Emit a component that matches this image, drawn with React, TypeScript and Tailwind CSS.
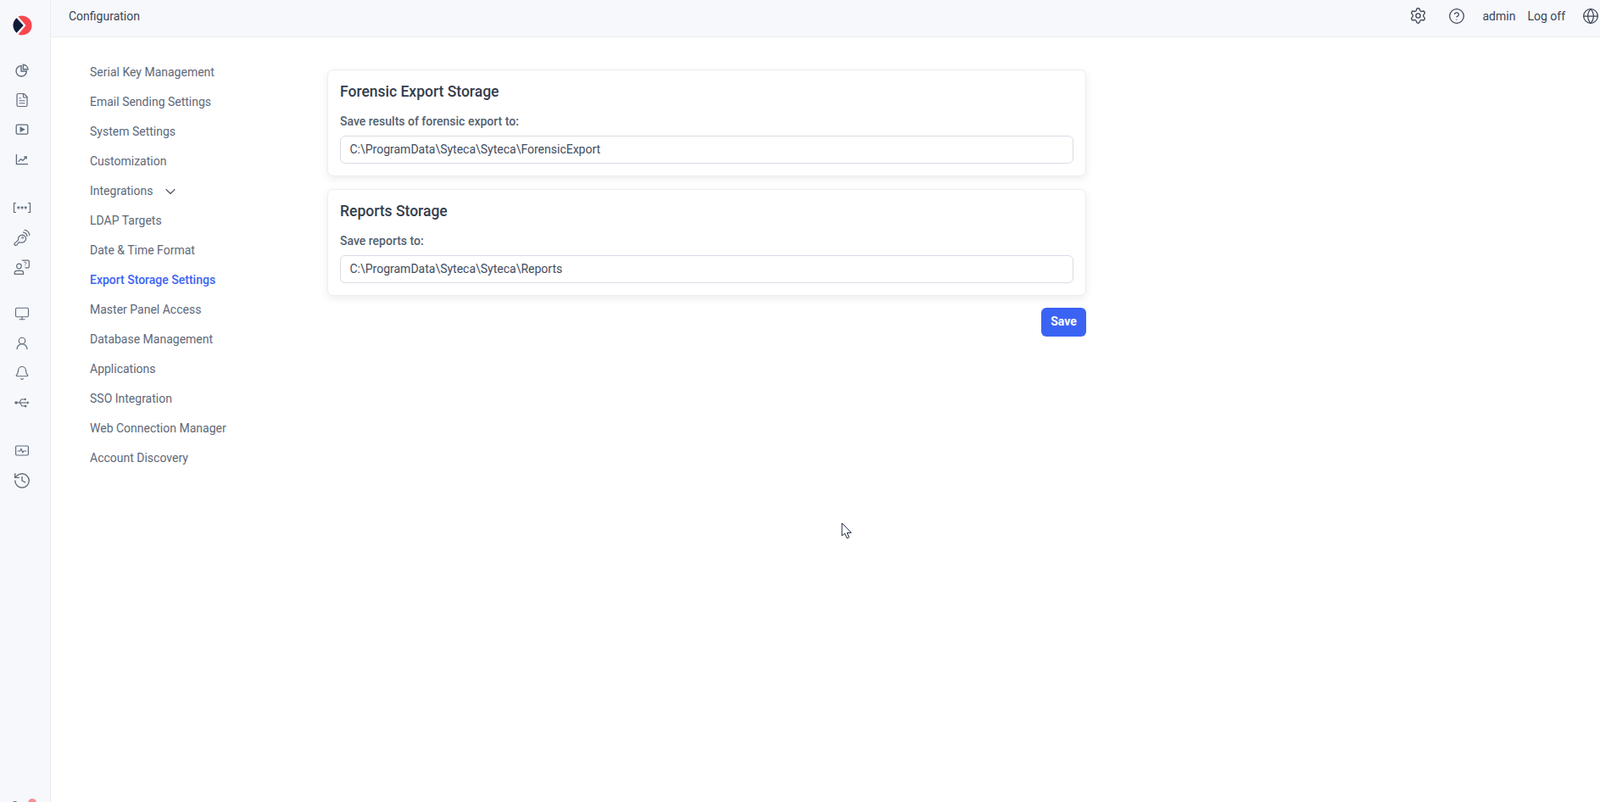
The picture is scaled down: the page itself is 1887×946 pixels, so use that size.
import { Bell, ChevronDown, CircleHelp, FileText, Globe, History, Monitor, Settings, UserRound } from "lucide-react";

const menu = [
  "Serial Key Management",
  "Email Sending Settings",
  "System Settings",
  "Customization",
  "Integrations",
  "LDAP Targets",
  "Date & Time Format",
  "Export Storage Settings",
  "Master Panel Access",
  "Database Management",
  "Applications",
  "SSO Integration",
  "Web Connection Manager",
  "Account Discovery",
];

function Logo() {
  return (
    <svg width="24" height="24" viewBox="0 0 24 24">
      <path d="M6.5 1.6A11.4 11.4 0 1 1 6.5 22.4L15.5 12Z" fill="#f8474f" />
      <path d="M4.6 3.2 12.6 12l-8 8.8A11.4 11.4 0 0 1 4.6 3.2Z" fill="#0d1b36" />
    </svg>
  );
}

function PieIcon() {
  return (
    <svg width="18" height="18" viewBox="0 0 18 18" fill="none" stroke="#5f6b7d" strokeWidth="1.4">
      <path d="M8 3.6A6.2 6.2 0 1 0 14.4 10H8Z" />
      <path d="M10.3 2.2A6 6 0 0 1 16 7.8h-5.7Z" />
    </svg>
  );
}

function PlayBox() {
  return (
    <svg width="18" height="18" viewBox="0 0 18 18" fill="none" stroke="#5f6b7d" strokeWidth="1.3">
      <rect x="2.2" y="3.2" width="13.6" height="11" rx="1.4" />
      <path d="M7.2 6.4 11.4 8.7 7.2 11Z" fill="#5f6b7d" />
    </svg>
  );
}

function TrendBox() {
  return (
    <svg width="18" height="18" viewBox="0 0 18 18" fill="none" stroke="#5f6b7d" strokeWidth="1.3">
      <path d="M2.4 3v11.6h13.6" />
      <path d="M4.6 11.6 7.6 8.6l2.2 1.8 4.2-4.2M11.4 6h2.8v2.6" />
    </svg>
  );
}

function MaskedIcon() {
  return (
    <svg width="22" height="14" viewBox="0 0 22 14" fill="none" stroke="#5f6b7d" strokeWidth="1.2">
      <path d="M4 1.5H1.5v11H4M18 1.5h2.5v11H18" />
      <path d="M6.8 5.2v3.6M5.3 6.1l3 1.8M8.3 6.1l-3 1.8M11 5.2v3.6M9.5 6.1l3 1.8M12.5 6.1l-3 1.8M15.2 5.2v3.6M13.7 6.1l3 1.8M16.7 6.1l-3 1.8" strokeWidth="1.1" />
    </svg>
  );
}

function KeySignal() {
  return (
    <svg width="20" height="20" viewBox="0 0 20 20" fill="none" stroke="#5f6b7d" strokeWidth="1.2">
      <path d="M.8 17.4 1.6 19.6 4 19l1-2 1.6-1.4c3 1 6 .4 7.4-2 1.5-3-.5-6.5-4-6.5-3 .2-5 3-4.4 6Z" />
      <circle cx="10.6" cy="10.4" r="1" strokeWidth="1" />
      <path d="M11 3.9c2.8.5 4.8 2.5 5.3 5.2" />
      <path d="M12.4 1c3.4.6 6 3.2 6.6 6.8" />
    </svg>
  );
}

function UserQuestion() {
  return (
    <svg width="20" height="20" viewBox="0 0 20 20" fill="none" stroke="#5f6b7d" strokeWidth="1.2">
      <circle cx="6.4" cy="9" r="2.8" />
      <path d="M1.2 18.4v-1.6c0-1.5 1.3-2.4 2.6-2.4h5.2c1.4 0 2.6.9 2.6 2.4v1.6Z" />
      <path d="M9.8 2.2h7.4c.7 0 1.1.4 1.1 1v6.6c0 .6-.4 1-1.1 1h-3.6" />
      <path d="M12.2 4.8c.3-.9 2.8-1 2.8.5 0 1-1.3 1.1-1.3 2.1M13.7 8.6v.5" strokeWidth="1" />
    </svg>
  );
}

function UsbIcon() {
  return (
    <svg width="18" height="12" viewBox="0 0 18 12" fill="none" stroke="#5f6b7d" strokeWidth="1.1">
      <circle cx="2" cy="6" r="1.7" fill="#5f6b7d" stroke="none" />
      <path d="M2 6h13.5" />
      <path d="M15 4.2 17.6 6 15 7.8Z" fill="#5f6b7d" stroke="none" />
      <path d="M5.6 6 8.2 2h3.4M6.6 6l2.4 4h3" />
      <circle cx="12.6" cy="2" r="1.2" fill="#5f6b7d" stroke="none" />
      <rect x="12" y="8.9" width="2.3" height="2.3" fill="#5f6b7d" stroke="none" />
    </svg>
  );
}

function PulseBox() {
  return (
    <svg width="18" height="18" viewBox="0 0 18 18" fill="none" stroke="#5f6b7d" strokeWidth="1.2">
      <rect x="1.6" y="3" width="14.8" height="11" rx="1.2" />
      <path d="M3.8 9h2.8l1.3-2.4 1.8 4 1.3-1.6h3.2" />
    </svg>
  );
}

function Cursor() {
  return (
    <svg width="14" height="21" viewBox="0 0 14 21" fill="white" stroke="#1d2840" strokeWidth="1">
      <path d="M1 1v15l3.4-2.8 2.5 5.6 2.5-1-2.4-5.4H12Z" />
    </svg>
  );
}

function Row({ children }: { children: React.ReactNode }) {
  return <div className="h-[35px] w-[52px] flex items-center justify-center">{children}</div>;
}

function Sidebar() {
  const cls = "text-[#5f6b7d]";
  return (
    <aside className="w-[60px] shrink-0 h-full bg-[#f7f8fb] border-r border-[#e9ebf0] flex flex-col relative overflow-hidden">
      <div className="h-[65.5px] w-[53px] flex items-center justify-center pt-[1px] pb-[6px]">
        <Logo />
      </div>
      <Row><PieIcon /></Row>
      <Row><FileText size={18} strokeWidth={1.6} className={cls} /></Row>
      <Row><PlayBox /></Row>
      <Row><TrendBox /></Row>
      <div className="mt-[22px]">
        <Row><MaskedIcon /></Row>
        <Row><KeySignal /></Row>
        <Row><UserQuestion /></Row>
      </div>
      <div className="mt-[20px]">
        <Row><Monitor size={18} strokeWidth={1.5} className={cls} /></Row>
        <Row><UserRound size={18} strokeWidth={1.6} className={cls} /></Row>
        <Row><Bell size={18} strokeWidth={1.6} className={cls} /></Row>
        <Row><UsbIcon /></Row>
      </div>
      <div className="mt-[22px]">
        <Row><PulseBox /></Row>
        <Row><History size={22} strokeWidth={1.5} className={cls} /></Row>
      </div>
      {/* clipped avatar at the bottom edge */}
      <div className="absolute left-[13px] top-[945px] w-[9px] h-[9px] rounded-full bg-[#5f6b7d]" />
      <div className="absolute left-[33px] top-[942px] w-[10px] h-[10px] rounded-full bg-[#f8616a] opacity-70" />
    </aside>
  );
}

function TopBar() {
  return (
    <header className="h-[44px] shrink-0 bg-[#f7f8fb] border-b border-[#e9ebf0] flex items-center pl-[21px] pr-[1px] pb-[5px] text-[14px] text-[#3a4456]">
      <span>Configuration</span>
      <div className="ml-auto flex items-center">
        <Settings size={21} strokeWidth={1.5} className="mb-[1px] text-[#3a4456]" />
        <CircleHelp size={20} strokeWidth={1.5} className="mb-[1px] ml-[25px] text-[#3a4456]" />
        <span className="ml-[20px]">admin</span>
        <span className="ml-[14px]">Log off</span>
        <Globe size={20} strokeWidth={1.5} className="mb-[1px] ml-[20px] text-[#3a4456]" />
      </div>
    </header>
  );
}

function StorageCard({ title, label, value }: { title: string; label: string; value: string }) {
  return (
    <section className="bg-white border border-[#ebedf2] rounded-[7px] shadow-[0_3px_10px_rgba(40,50,80,0.09)] px-[14px] pt-[13px] pb-[14px]">
      <h2 className="text-[17.5px] leading-[24px] font-medium text-[#343c4b]">{title}</h2>
      <p className="mt-[12.5px] text-[14px] leading-[20px] font-medium text-[#565f6e]">{label}</p>
      <input
        readOnly
        value={value}
        className="mt-[7px] block w-full h-[33.5px] rounded-[6px] border border-[#d9dce6] px-[10.5px] text-[14px] text-[#434c5c] outline-none"
      />
    </section>
  );
}

export default function App() {
  return (
    <div className="relative w-full h-[946px] flex overflow-hidden bg-white font-['Roboto',sans-serif]">
      <Sidebar />
      <div className="flex-1 flex flex-col min-w-0">
        <TopBar />
        <div className="flex flex-1 pt-[24px]">
          <nav className="w-[326px] shrink-0 pl-[46px]">
            {menu.map((item) => (
              <div
                key={item}
                className={`h-[35px] flex items-center text-[14px] ${item === "Export Storage Settings" ? "text-[#3b63f3] font-medium" : "text-[#5e6878]"}`}
              >
                {item}
                {item === "Integrations" && <ChevronDown size={20} strokeWidth={1.3} className="ml-[11px] text-[#4b5565]" />}
              </div>
            ))}
          </nav>
          <main className="w-[895px] pt-[14px]">
            <div className="flex flex-col gap-[15px]">
              <StorageCard
                title="Forensic Export Storage"
                label="Save results of forensic export to:"
                value="C:\ProgramData\Syteca\Syteca\ForensicExport"
              />
              <StorageCard
                title="Reports Storage"
                label="Save reports to:"
                value="C:\ProgramData\Syteca\Syteca\Reports"
              />
            </div>
            <div className="flex justify-end mt-[14px]">
              <button className="h-[34px] w-[53px] rounded-[6px] bg-[#3b63f3] text-white text-[14px] font-bold pb-[1px]">Save</button>
            </div>
          </main>
        </div>
      </div>
      {/* mouse pointer caught in the screenshot */}
      <div className="absolute left-[992px] top-[616px]">
        <Cursor />
      </div>
    </div>
  );
}
